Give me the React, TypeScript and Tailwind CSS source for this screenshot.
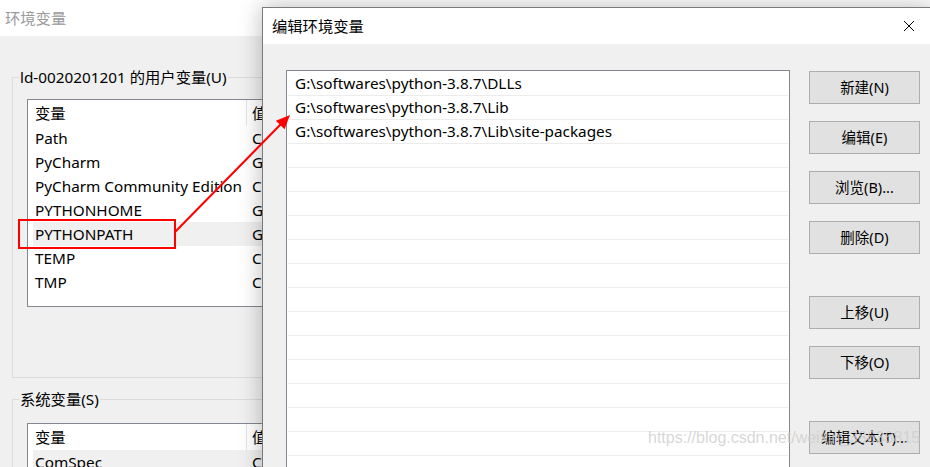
import React from "react"

const userVars = [
  { name: "Path", value: "C:\\Users\\ld-0020201201\\AppData\\Local\\Microsoft\\WindowsApps;" },
  { name: "PyCharm", value: "G:\\softwares\\PyCharm 2020.3\\bin;" },
  { name: "PyCharm Community Edition", value: "C:\\Program Files\\JetBrains\\PyCharm Community Edition\\bin;" },
  { name: "PYTHONHOME", value: "G:\\softwares\\python-3.8.7" },
  { name: "PYTHONPATH", value: "G:\\softwares\\python-3.8.7\\DLLs;G:\\softwares\\python-3.8.7\\Lib", selected: true },
  { name: "TEMP", value: "C:\\Users\\ld-0020201201\\AppData\\Local\\Temp" },
  { name: "TMP", value: "C:\\Users\\ld-0020201201\\AppData\\Local\\Temp" }
]

const paths = [
  "G:\\softwares\\python-3.8.7\\DLLs",
  "G:\\softwares\\python-3.8.7\\Lib",
  "G:\\softwares\\python-3.8.7\\Lib\\site-packages"
]

const VarList = ({
  rows,
  height
}: {
  rows: { name: string; value: string; selected?: boolean }[]
  height: string
}) => (
  <div className={`w-[540px] ${height} border border-[#828790] bg-white pl-[5px] overflow-hidden`}>
    <div className="flex h-[26px] items-center">
      <div className="w-[214px] shrink-0 h-full flex items-center pl-[2px] border-r border-[#e5e5e5]">变量</div>
      <div className="pl-[5px]">值</div>
    </div>
    {rows.map((r) => (
      <div
        key={r.name}
        className={`flex h-[24px] items-center whitespace-nowrap ${r.selected ? "bg-[#f0f0f0]" : ""}`}
      >
        <div className="w-[214px] shrink-0 pl-[2px]">{r.name}</div>
        <div className="pl-[5px]">{r.value}</div>
      </div>
    ))}
  </div>
)

const Button = ({ label, className = "" }: { label: string; className?: string }) => (
  <button
    type="button"
    className={`w-[111px] h-[33px] bg-[#e1e1e1] border border-[#adadad] text-[14.5px] text-black flex items-center justify-center ${className}`}
  >
    {label}
  </button>
)

export default function App() {
  return (
    <div className="relative w-[930px] h-[467px] overflow-hidden bg-white text-[15.3px] text-black font-['Noto_Sans','Noto_Sans_CJK_SC',sans-serif]">
      {/* background window: 环境变量 */}
      <div className="flex flex-col w-[787px] h-full">
        <div className="h-[36px] shrink-0 bg-white flex items-center pl-[5px] text-[#9a9a9a]">环境变量</div>
        <div className="flex-1 bg-[#f0f0f0] pl-[12px] pt-[31px]">
          <fieldset className="w-[700px] h-[311px] border border-[#dcdcdc]">
            <legend className="ml-[6px] px-[1px] leading-[20px]">ld-0020201201 的用户变量(U)</legend>
            <div className="pl-[14px] pt-[12px]">
              <VarList rows={userVars} height="h-[208px]" />
            </div>
          </fieldset>
          <fieldset className="mt-[11px] w-[700px] h-[120px] border border-[#dcdcdc]">
            <legend className="ml-[6px] px-[1px] leading-[20px]">系统变量(S)</legend>
            <div className="pl-[14px] pt-[14px]">
              <VarList rows={[{ name: "ComSpec", value: "C:\\Windows\\system32\\cmd.exe", selected: true }]} height="h-[120px]" />
            </div>
          </fieldset>
        </div>
      </div>

      {/* foreground dialog: 编辑环境变量 */}
      <div className="absolute left-[262px] top-[7px] w-[671px] h-[480px] border border-[#7a7a7a] bg-[#f0f0f0] shadow-[0_0_22px_rgba(0,0,0,0.28)] flex flex-col">
        <div className="h-[36px] shrink-0 bg-white flex items-center justify-between">
          <span className="pl-[9px]">编辑环境变量</span>
          <div className="w-[46px] h-full flex items-center justify-center">
            <svg width="12" height="12" viewBox="0 0 12 12">
              <path d="M1 1L11 11M11 1L1 11" stroke="#000" strokeWidth="1" />
            </svg>
          </div>
        </div>
        <div className="flex pl-[23px] pt-[26px]">
          <div className="w-[504px] h-[420px] border border-[#828790] bg-white pt-[1px] overflow-hidden">
            {Array.from({ length: 18 }).map((_, i) => (
              <div
                key={i}
                className="h-[24px] mx-[1px] border-b border-[#ececec] flex items-center pl-[7px] whitespace-nowrap"
              >
                {paths[i] ?? ""}
              </div>
            ))}
          </div>
          <div className="ml-[19px] pt-[1px] flex flex-col">
            <Button label="新建(N)" />
            <Button label="编辑(E)" className="mt-[17px]" />
            <Button label="浏览(B)..." className="mt-[17px]" />
            <Button label="删除(D)" className="mt-[17px]" />
            <Button label="上移(U)" className="mt-[42px]" />
            <Button label="下移(O)" className="mt-[17px]" />
            <Button label="编辑文本(T)..." className="mt-[42px]" />
          </div>
        </div>
      </div>

      {/* annotation: red box and arrow */}
      <svg className="absolute inset-0 pointer-events-none" width="930" height="467" viewBox="0 0 930 467">
        <rect x="19" y="220" width="156" height="28" fill="none" stroke="#ff0000" strokeWidth="2" />
        <line x1="175" y1="232" x2="281" y2="124" stroke="#ff0000" strokeWidth="2" />
        <polygon points="290,115 284.5,129.2 275.9,120.8" fill="#ff0000" />
      </svg>

      {/* watermark */}
      <div className="absolute left-[648px] top-[427px] text-[16px] leading-[22px] text-[rgba(205,205,205,0.8)] font-['Liberation_Sans',sans-serif] pointer-events-none whitespace-nowrap">
        https://blog.csdn.net/weixin_38636815
      </div>
    </div>
  )
}
